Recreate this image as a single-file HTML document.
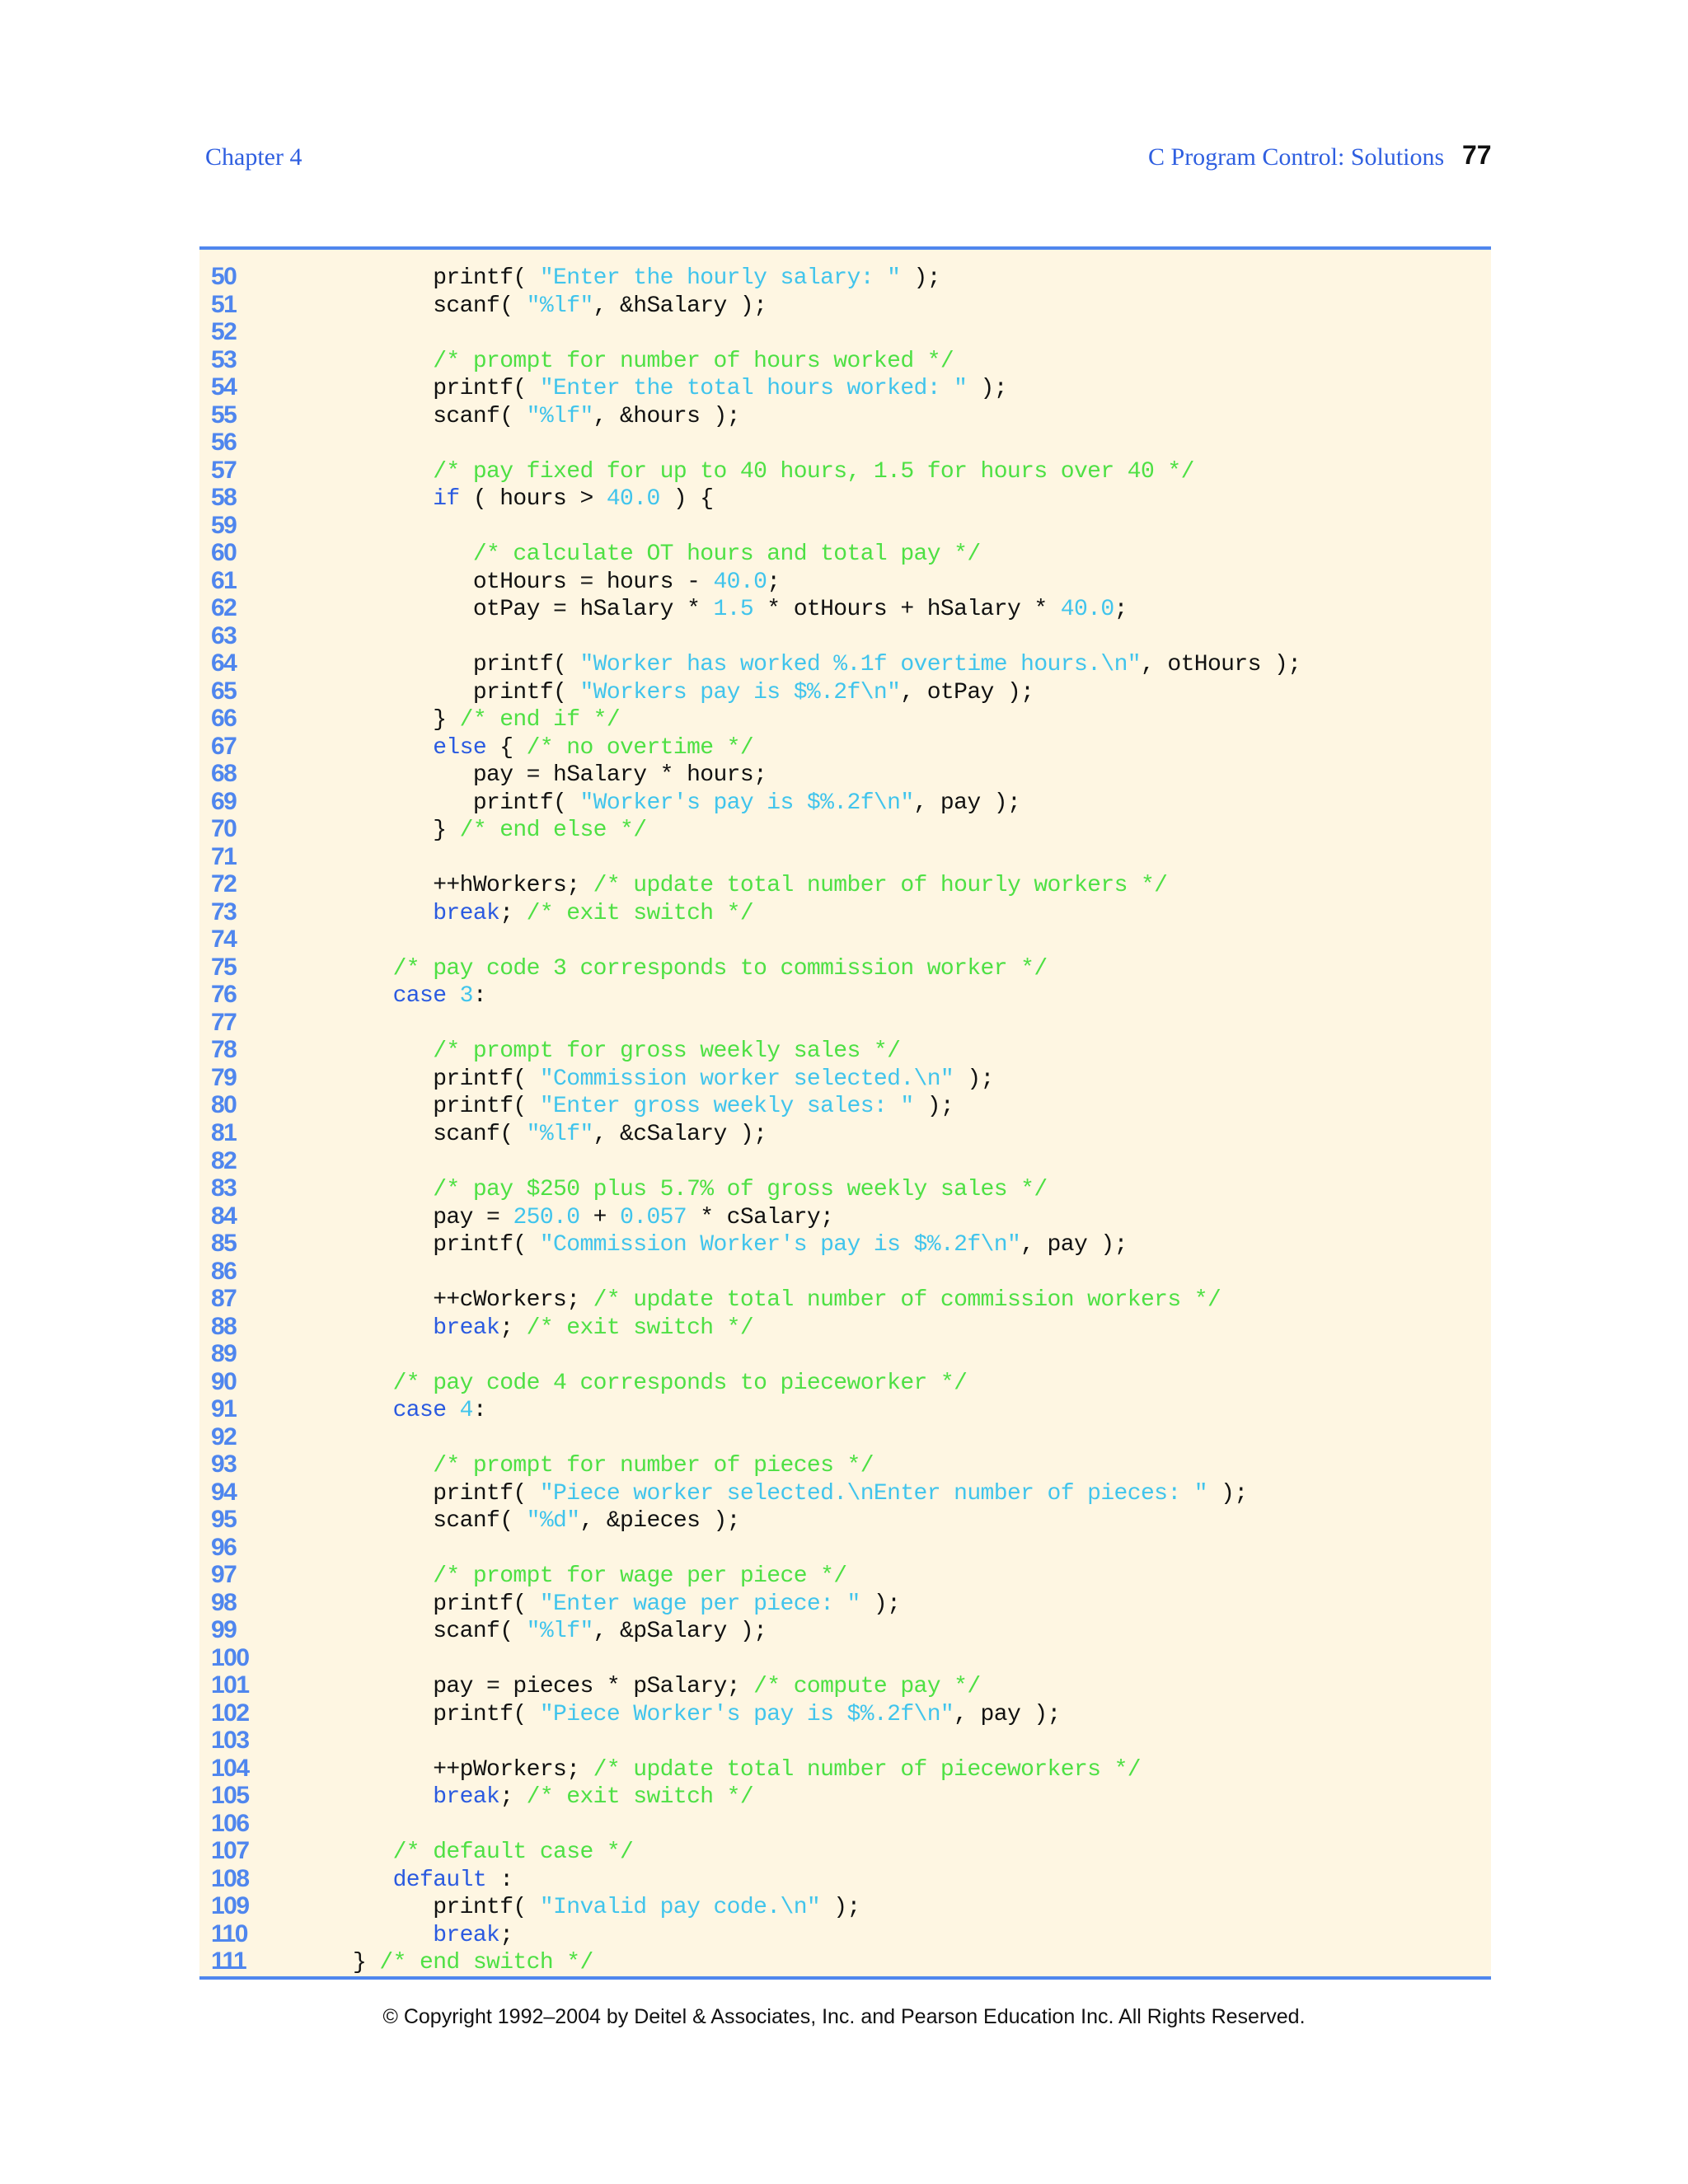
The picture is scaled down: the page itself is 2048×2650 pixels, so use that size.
<!DOCTYPE html>
<html><head><meta charset="utf-8"><style>
html,body{margin:0;padding:0;background:#fff;}
body{width:2048px;height:2650px;position:relative;overflow:hidden;}
.hd{position:absolute;top:174px;font-family:"Liberation Serif",serif;font-size:30px;color:#2f5fe0;}
.pg{position:absolute;top:170px;left:1774px;font-family:"Liberation Sans",sans-serif;font-size:32px;font-weight:bold;color:#111;}
.box{position:absolute;left:242px;top:299px;width:1567px;height:2103px;background:#fef6e2;border-top:4px solid #4f86ee;border-bottom:4px solid #4f86ee;box-sizing:border-box;}
.code{position:absolute;left:0;top:321px;width:2048px;}
.l{height:33.52px;line-height:33.52px;position:relative;white-space:pre;font-family:"Liberation Mono",monospace;font-size:28px;letter-spacing:-0.6px;color:#111;}
.n{position:absolute;left:256px;top:-2px;font-family:"Liberation Sans",sans-serif;font-weight:bold;font-size:30px;color:#4f86ee;letter-spacing:-1.5px;}
.c{position:absolute;left:428px;}
.k{color:#2a5ae0}.s{color:#40c4ec}.m{color:#4ee044}
.ft{position:absolute;top:2433px;left:0;width:2048px;text-align:center;font-family:"Liberation Sans",sans-serif;font-size:25px;color:#111;}
</style></head><body>
<div class="hd" style="left:249px">Chapter 4</div>
<div class="hd" style="left:1393px">C Program Control: Solutions</div>
<div class="pg">77</div>
<div class="box"></div>
<div class="code">
<div class="l"><span class="n">50</span><span class="c">      printf( <span class="s">"Enter the hourly salary: "</span> );</span></div>
<div class="l"><span class="n">51</span><span class="c">      scanf( <span class="s">"%lf"</span>, &amp;hSalary );</span></div>
<div class="l"><span class="n">52</span></div>
<div class="l"><span class="n">53</span><span class="c">      <span class="m">/* prompt for number of hours worked */</span></span></div>
<div class="l"><span class="n">54</span><span class="c">      printf( <span class="s">"Enter the total hours worked: "</span> );</span></div>
<div class="l"><span class="n">55</span><span class="c">      scanf( <span class="s">"%lf"</span>, &amp;hours );</span></div>
<div class="l"><span class="n">56</span></div>
<div class="l"><span class="n">57</span><span class="c">      <span class="m">/* pay fixed for up to 40 hours, 1.5 for hours over 40 */</span></span></div>
<div class="l"><span class="n">58</span><span class="c">      <span class="k">if</span> ( hours &gt; <span class="s">40.0</span> ) {</span></div>
<div class="l"><span class="n">59</span></div>
<div class="l"><span class="n">60</span><span class="c">         <span class="m">/* calculate OT hours and total pay */</span></span></div>
<div class="l"><span class="n">61</span><span class="c">         otHours = hours - <span class="s">40.0</span>;</span></div>
<div class="l"><span class="n">62</span><span class="c">         otPay = hSalary * <span class="s">1.5</span> * otHours + hSalary * <span class="s">40.0</span>;</span></div>
<div class="l"><span class="n">63</span></div>
<div class="l"><span class="n">64</span><span class="c">         printf( <span class="s">"Worker has worked %.1f overtime hours.\n"</span>, otHours );</span></div>
<div class="l"><span class="n">65</span><span class="c">         printf( <span class="s">"Workers pay is $%.2f\n"</span>, otPay );</span></div>
<div class="l"><span class="n">66</span><span class="c">      } <span class="m">/* end if */</span></span></div>
<div class="l"><span class="n">67</span><span class="c">      <span class="k">else</span> { <span class="m">/* no overtime */</span></span></div>
<div class="l"><span class="n">68</span><span class="c">         pay = hSalary * hours;</span></div>
<div class="l"><span class="n">69</span><span class="c">         printf( <span class="s">"Worker's pay is $%.2f\n"</span>, pay );</span></div>
<div class="l"><span class="n">70</span><span class="c">      } <span class="m">/* end else */</span></span></div>
<div class="l"><span class="n">71</span></div>
<div class="l"><span class="n">72</span><span class="c">      ++hWorkers; <span class="m">/* update total number of hourly workers */</span></span></div>
<div class="l"><span class="n">73</span><span class="c">      <span class="k">break</span>; <span class="m">/* exit switch */</span></span></div>
<div class="l"><span class="n">74</span></div>
<div class="l"><span class="n">75</span><span class="c">   <span class="m">/* pay code 3 corresponds to commission worker */</span></span></div>
<div class="l"><span class="n">76</span><span class="c">   <span class="k">case</span> <span class="s">3</span>:</span></div>
<div class="l"><span class="n">77</span></div>
<div class="l"><span class="n">78</span><span class="c">      <span class="m">/* prompt for gross weekly sales */</span></span></div>
<div class="l"><span class="n">79</span><span class="c">      printf( <span class="s">"Commission worker selected.\n"</span> );</span></div>
<div class="l"><span class="n">80</span><span class="c">      printf( <span class="s">"Enter gross weekly sales: "</span> );</span></div>
<div class="l"><span class="n">81</span><span class="c">      scanf( <span class="s">"%lf"</span>, &amp;cSalary );</span></div>
<div class="l"><span class="n">82</span></div>
<div class="l"><span class="n">83</span><span class="c">      <span class="m">/* pay $250 plus 5.7% of gross weekly sales */</span></span></div>
<div class="l"><span class="n">84</span><span class="c">      pay = <span class="s">250.0</span> + <span class="s">0.057</span> * cSalary;</span></div>
<div class="l"><span class="n">85</span><span class="c">      printf( <span class="s">"Commission Worker's pay is $%.2f\n"</span>, pay );</span></div>
<div class="l"><span class="n">86</span></div>
<div class="l"><span class="n">87</span><span class="c">      ++cWorkers; <span class="m">/* update total number of commission workers */</span></span></div>
<div class="l"><span class="n">88</span><span class="c">      <span class="k">break</span>; <span class="m">/* exit switch */</span></span></div>
<div class="l"><span class="n">89</span></div>
<div class="l"><span class="n">90</span><span class="c">   <span class="m">/* pay code 4 corresponds to pieceworker */</span></span></div>
<div class="l"><span class="n">91</span><span class="c">   <span class="k">case</span> <span class="s">4</span>:</span></div>
<div class="l"><span class="n">92</span></div>
<div class="l"><span class="n">93</span><span class="c">      <span class="m">/* prompt for number of pieces */</span></span></div>
<div class="l"><span class="n">94</span><span class="c">      printf( <span class="s">"Piece worker selected.\nEnter number of pieces: "</span> );</span></div>
<div class="l"><span class="n">95</span><span class="c">      scanf( <span class="s">"%d"</span>, &amp;pieces );</span></div>
<div class="l"><span class="n">96</span></div>
<div class="l"><span class="n">97</span><span class="c">      <span class="m">/* prompt for wage per piece */</span></span></div>
<div class="l"><span class="n">98</span><span class="c">      printf( <span class="s">"Enter wage per piece: "</span> );</span></div>
<div class="l"><span class="n">99</span><span class="c">      scanf( <span class="s">"%lf"</span>, &amp;pSalary );</span></div>
<div class="l"><span class="n">100</span></div>
<div class="l"><span class="n">101</span><span class="c">      pay = pieces * pSalary; <span class="m">/* compute pay */</span></span></div>
<div class="l"><span class="n">102</span><span class="c">      printf( <span class="s">"Piece Worker's pay is $%.2f\n"</span>, pay );</span></div>
<div class="l"><span class="n">103</span></div>
<div class="l"><span class="n">104</span><span class="c">      ++pWorkers; <span class="m">/* update total number of pieceworkers */</span></span></div>
<div class="l"><span class="n">105</span><span class="c">      <span class="k">break</span>; <span class="m">/* exit switch */</span></span></div>
<div class="l"><span class="n">106</span></div>
<div class="l"><span class="n">107</span><span class="c">   <span class="m">/* default case */</span></span></div>
<div class="l"><span class="n">108</span><span class="c">   <span class="k">default</span> :</span></div>
<div class="l"><span class="n">109</span><span class="c">      printf( <span class="s">"Invalid pay code.\n"</span> );</span></div>
<div class="l"><span class="n">110</span><span class="c">      <span class="k">break</span>;</span></div>
<div class="l"><span class="n">111</span><span class="c">} <span class="m">/* end switch */</span></span></div>
</div>
<div class="ft">© Copyright 1992–2004 by Deitel &amp; Associates, Inc. and Pearson Education Inc. All Rights Reserved.</div>
</body></html>
